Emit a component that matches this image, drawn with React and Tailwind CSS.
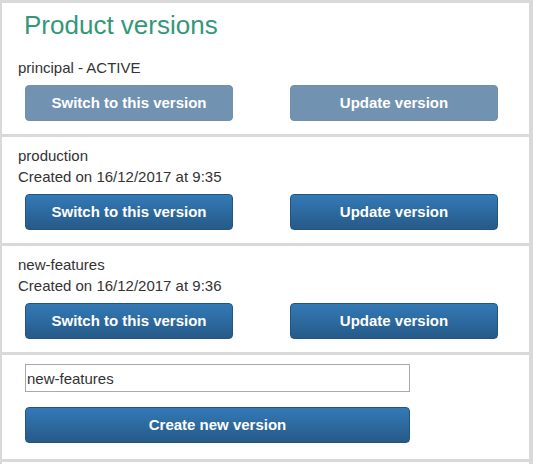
import React from 'react';

const versions = [
  { name: 'production', created: 'Created on 16/12/2017 at 9:35' },
  { name: 'new-features', created: 'Created on 16/12/2017 at 9:36' },
];

const VersionButton = ({ children, disabled, className = '' }) => {
  if (disabled) {
    return (
      <button
        disabled
        className={`h-9 rounded-[4px] border border-[#245580] bg-[#265a88] opacity-65 text-white font-bold text-[15px] ${className}`}
      >
        {children}
      </button>
    );
  }
  return (
    <button
      className={`h-9 rounded-[4px] border border-[#245580] bg-gradient-to-b from-[#337ab7] to-[#265a88] text-white font-bold text-[15px] ${className}`}
    >
      {children}
    </button>
  );
};

const ButtonRow = ({ disabled }) => (
  <div className="flex pl-[7px] gap-[57px]">
    <VersionButton disabled={disabled} className="w-[208px]">Switch to this version</VersionButton>
    <VersionButton disabled={disabled} className="w-[208px]">Update version</VersionButton>
  </div>
);

export default function App() {
  return (
    <div
      className="w-[533px] h-[464px] overflow-hidden bg-[#d9d9d9] pl-[2px] pr-[4px] pt-[3px] flex flex-col gap-[3px] text-[#333333] text-[15px]"
      style={{ fontFamily: '"Liberation Sans", Arial, sans-serif' }}
    >
      <div className="bg-white pl-[16px] pt-[5px] h-[131px]">
        <h1 className="text-[26px] leading-[34px] text-[#34977a] pl-[6px]">Product versions</h1>
        <div className="mt-[15px] leading-[21px]">principal - ACTIVE</div>
        <div className="mt-[7px]">
          <ButtonRow disabled />
        </div>
      </div>

      {versions.map((v) => (
        <div key={v.name} className="bg-white pl-[16px] pt-[8px] h-[106px]">
          <div className="leading-[21px]">{v.name}</div>
          <div className="leading-[21px]">{v.created}</div>
          <div className="mt-[7px]">
            <ButtonRow />
          </div>
        </div>
      ))}

      <div className="bg-white pl-[23px] pt-[9px] h-[104px]">
        <input
          type="text"
          defaultValue="new-features"
          className="block w-[385px] h-[28px] border border-[#a9a9a9] px-[1px] text-[15px] text-[#333333] outline-none"
          style={{ fontFamily: '"Liberation Sans", Arial, sans-serif' }}
        />
        <VersionButton className="mt-[15px] w-[385px]">Create new version</VersionButton>
      </div>

      <div className="bg-white flex-1" />
    </div>
  );
}
